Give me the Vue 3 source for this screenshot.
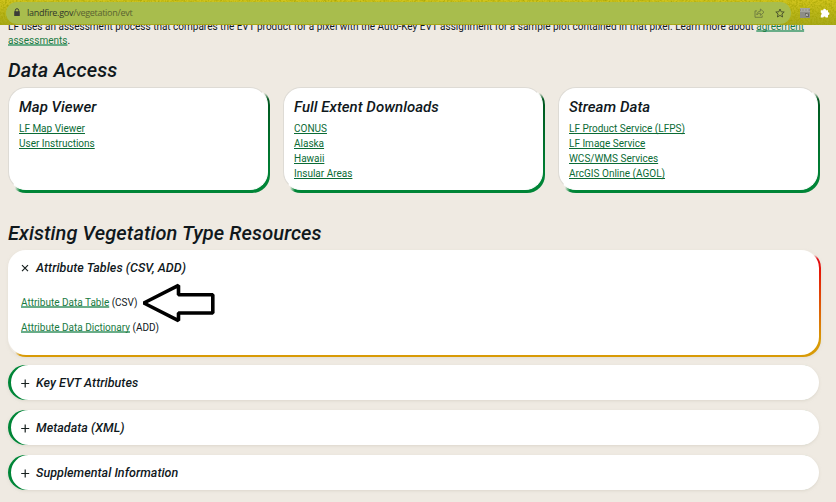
<script setup>
const cards = [
  { title: 'Map Viewer', links: ['LF Map Viewer', 'User Instructions'] },
  { title: 'Full Extent Downloads', links: ['CONUS', 'Alaska', 'Hawaii', 'Insular Areas'] },
  {
    title: 'Stream Data',
    links: ['LF Product Service (LFPS)', 'LF Image Service', 'WCS/WMS Services', 'ArcGIS Online (AGOL)'],
  },
]
const tables = [
  { name: 'Attribute Data Table', kind: '(CSV)', marked: true },
  { name: 'Attribute Data Dictionary', kind: '(ADD)', marked: false },
]
const sections = ['Key EVT Attributes', 'Metadata (XML)', 'Supplemental Information']
</script>

<template>
  <div class="window">
    <header class="toolbar">
      <svg class="glitter" width="836" height="25" aria-hidden="true">
        <filter id="grain" x="0" y="0" width="100%" height="100%">
          <feTurbulence type="fractalNoise" baseFrequency="0.55" numOctaves="2" seed="4" />
          <feColorMatrix values="0 0 0 0 0.35  0 0 0 0 0.35  0 0 0 0 0  1.6 0 0 0 -0.6" />
        </filter>
        <rect width="836" height="25" filter="url(#grain)" />
      </svg>
      <div class="address">
        <svg class="lock" width="8" height="9" viewBox="0 0 8 9">
          <path d="M2.3 4V2.4a1.7 1.7 0 0 1 3.4 0V4" fill="none" stroke="#3b3d38" stroke-width="1" />
          <rect x="1.2" y="3.2" width="5.6" height="4.8" rx=".5" fill="#3b3d38" />
        </svg>
        <span class="url"><b>landfire.gov</b>/vegetation/evt</span>
        <svg class="share" width="11" height="10" viewBox="0 0 11 10" fill="none" stroke="#66713f" stroke-width=".8">
          <path d="M3 2.9H1v6.4h7.2V7.4" />
          <path d="M2.8 7C3 4.6 4.3 3.3 6.4 3.2V1L10 4.2 6.4 7.4V5.3C4.7 5.3 3.5 5.8 2.8 7Z" />
        </svg>
        <svg class="star" width="10" height="10" viewBox="0 0 10 10" fill="none" stroke="#4d562e" stroke-width="1">
          <path d="M5 1 6.2 3.8 9.2 4 6.9 6 7.6 9 5 7.4 2.4 9 3.1 6 .8 4 3.8 3.8Z" />
        </svg>
      </div>
      <svg class="ext" width="10" height="10" viewBox="0 0 10 10">
        <rect width="10" height="10" fill="#8d8d88" />
        <path d="M0 .5h10M0 3.5h10" stroke="#a5a5a0" />
        <path d="M1 2h8" stroke="#c9c9c4" stroke-dasharray="1 .5" />
        <path d="M5 5h4v4H6z" fill="#65655f" />
        <path d="M6 6l2 2M8 5.5 6 8" stroke="#d4d4d0" stroke-width=".7" />
      </svg>
      <svg class="puzzle" width="10" height="10" viewBox="0 0 10 10">
        <path
          d="M.8 2.2h2.4a1.4 1.4 0 1 1 2.8 0h2v2.1a1.4 1.4 0 0 1 0 2.8v2.3H5.7a1.3 1.3 0 0 0-2.4 0H.8V7.1a1.4 1.4 0 0 0 0-2.6Z"
          fill="#fff"
        />
      </svg>
    </header>

    <main class="page">
      <p class="intro">
        <span class="line first">LF uses an assessment process that compares the EVT product for a pixel with the Auto-Key EVT assignment for a sample plot contained in that pixel. Learn more about <a class="thick">agreement</a></span>
        <span class="line"><a class="thick">assessments</a>.</span>
      </p>

      <h2 class="access">Data Access</h2>
      <div class="cards">
        <div v-for="card in cards" :key="card.title" class="edge">
          <section class="card">
            <h3>{{ card.title }}</h3>
            <ul>
              <li v-for="link in card.links" :key="link"><a>{{ link }}</a></li>
            </ul>
          </section>
        </div>
      </div>

      <h2 class="resources">Existing Vegetation Type Resources</h2>
      <div class="edge warm">
        <section class="open">
          <h4>
            <svg class="sign" width="9" height="9" viewBox="0 0 9 9"><path d="M1 1.2l6 6M7 1.2l-6 6" /></svg>
            Attribute Tables (CSV, ADD)
          </h4>
          <p v-for="table in tables" :key="table.name" class="table-row">
            <a class="thick">{{ table.name }}</a>&nbsp;{{ table.kind }}
            <svg v-if="table.marked" class="arrow" width="76" height="42" viewBox="0 0 76 42">
              <path d="M2.8 22 37.5 4.4v9.3h34.3v18.3H37.5v7.6Z" />
            </svg>
          </p>
        </section>
      </div>
      <div v-for="section in sections" :key="section" class="closed">
        <h4>
          <svg class="sign" width="9" height="9" viewBox="0 0 9 9"><path d="M4.2 .5v8M.2 4.5h8" /></svg>
          {{ section }}
        </h4>
      </div>
    </main>
  </div>
</template>

<style>
body {
  background: #efeae2;
}
</style>

<style scoped>
.window {
  width: 836px;
  height: 502px;
  overflow: hidden;
  background: #efeae2;
  color: #10181c;
  font-family: Roboto, "Liberation Sans", sans-serif;
}
.toolbar {
  position: relative;
  display: flex;
  align-items: center;
  height: 25px;
  background: linear-gradient(#d2c51d, #b9b51a 55%, #a7a91b);
}
.glitter {
  position: absolute;
  inset: 0;
}
.address {
  position: relative;
  display: flex;
  align-items: center;
  box-sizing: border-box;
  width: 785px;
  height: 22px;
  margin-left: 6px;
  padding: 0 6px 0 7px;
  border-radius: 11px;
  background: #a8bd4d;
}
.lock {
  margin-right: 6px;
}
.url {
  flex: 1;
  color: #596331;
  font: 9px/14px "Open Sans", "Noto Sans", sans-serif;
  letter-spacing: -0.28px;
}
.url b {
  color: #30362a;
  font-weight: 400;
}
.share {
  margin-right: 10px;
}
.ext {
  position: relative;
  margin-left: 9px;
}
.puzzle {
  position: relative;
  margin-left: 10px;
}
.page {
  padding: 0 15px 0 8px;
}
p,
h2,
h3,
h4,
ul {
  margin: 0;
  padding: 0;
}
ul {
  list-style: none;
}
.intro {
  height: 22px;
  overflow: hidden;
  font-size: 10px;
  line-height: 15px;
}
.line {
  display: block;
  white-space: nowrap;
}
.first {
  margin-top: -5px;
  line-height: 13px;
}
a {
  color: #0a6b35;
  text-decoration: underline;
  text-decoration-thickness: 1px;
  text-decoration-skip-ink: none;
  text-underline-offset: 1px;
}
.thick {
  color: #187a42;
  text-decoration-color: #69ad88;
  text-decoration-thickness: 2px;
  text-underline-offset: 0;
}
h2,
h3,
h4 {
  font-style: italic;
  font-weight: 500;
  white-space: nowrap;
}
h2 {
  font-size: 20px;
  line-height: 24px;
  letter-spacing: 0.09px;
}
.access {
  margin-top: 11px;
}
.cards {
  display: grid;
  grid-template-columns: repeat(3, 262px);
  gap: 13px;
  margin-top: 5px;
}
.edge {
  box-sizing: border-box;
  height: 106px;
  padding: 0 2px 3px 0;
  border-radius: 18px;
  background:
    linear-gradient(90deg, #efeae2 7px, transparent 12px),
    linear-gradient(#efeae2 6px, #00571f 12px, #008537 90%);
}
.card {
  box-sizing: border-box;
  height: 103px;
  padding: 10px 10px 8px;
  border: 1px solid #dedbd5;
  border-right-color: #fff;
  border-bottom-color: #fff;
  border-radius: 18px;
  background: #fff;
}
h3 {
  font-size: 15px;
  line-height: 18px;
  letter-spacing: 0.04px;
}
.card ul {
  margin-top: 5px;
  font-size: 10px;
  line-height: 15px;
}
.resources {
  margin-top: 28px;
}
.warm {
  height: 107px;
  margin-top: 5px;
  background:
    linear-gradient(90deg, #efeae2 7px, transparent 12px),
    linear-gradient(#efeae2 5px, #e20a12 9px, #e51a08 22px, #d89a06 90px);
  box-shadow: 0 1px 3px #cfc9bd60;
}
.open {
  box-sizing: border-box;
  height: 105px;
  padding: 9px 13px;
  border-radius: 18px;
  background: #fff;
}
h4 {
  display: flex;
  align-items: center;
  font-size: 12.5px;
  line-height: 18px;
  letter-spacing: 0.04px;
}
.sign {
  flex: none;
  margin-right: 6px;
  fill: none;
  stroke: #17201f;
  stroke-width: 1.2;
}
.table-row {
  position: relative;
  margin-top: 10px;
  font-size: 10px;
  line-height: 15px;
}
h4 + .table-row {
  margin-top: 18px;
}
.arrow {
  position: absolute;
  left: 120px;
  top: -14px;
  fill: #fff;
  stroke: #000;
  stroke-width: 3.6;
}
.arrow path {
  stroke-linejoin: bevel;
}
.closed {
  box-sizing: border-box;
  width: 811px;
  height: 35px;
  margin-top: 10px;
  padding: 9px 0 0 13px;
  border-radius: 18px;
  background: #fff;
  box-shadow:
    inset 3px 0 0 #008537,
    0 1px 3px #cfc9bd90;
}
.warm + .closed {
  margin-top: 8px;
}
</style>
